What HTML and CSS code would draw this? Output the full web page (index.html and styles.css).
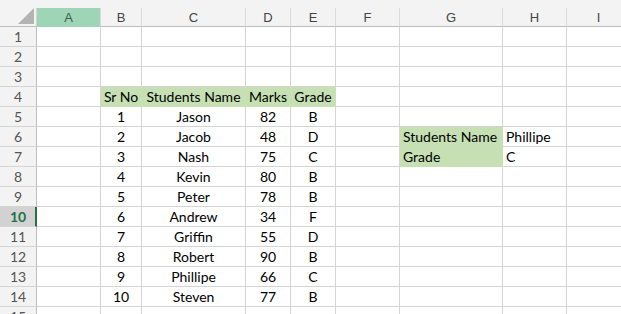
FILE: index.html
```html
<!DOCTYPE html>
<html lang="en">
<head>
  <meta charset="UTF-8">
  <title>Students Grades</title>
  <link rel="stylesheet" href="styles.css">
</head>
<body>
  <div class="sheet">
    <div class="top-strip"></div>

    <div class="row col-heads">
      <div class="corner">
        <svg width="16" height="16" viewBox="0 0 16 16"><polygon points="0,16 16,16 16,0" fill="#b4b4b4"/></svg>
      </div>
      <div class="ch selected">A</div>
      <div class="ch">B</div>
      <div class="ch">C</div>
      <div class="ch">D</div>
      <div class="ch">E</div>
      <div class="ch">F</div>
      <div class="ch">G</div>
      <div class="ch">H</div>
      <div class="ch">I</div>
    </div>

    <div class="row">
      <div class="rh">1</div>
      <div class="c"></div><div class="c"></div><div class="c"></div><div class="c"></div><div class="c"></div><div class="c"></div><div class="c"></div><div class="c"></div><div class="c"></div>
    </div>
    <div class="row">
      <div class="rh">2</div>
      <div class="c"></div><div class="c"></div><div class="c"></div><div class="c"></div><div class="c"></div><div class="c"></div><div class="c"></div><div class="c"></div><div class="c"></div>
    </div>
    <div class="row">
      <div class="rh">3</div>
      <div class="c"></div><div class="c"></div><div class="c"></div><div class="c"></div><div class="c"></div><div class="c"></div><div class="c"></div><div class="c"></div><div class="c"></div>
    </div>
    <div class="row">
      <div class="rh">4</div>
      <div class="c"></div>
      <div class="c fill mid">Sr No</div>
      <div class="c fill mid">Students Name</div>
      <div class="c fill mid">Marks</div>
      <div class="c fill mid">Grade</div>
      <div class="c"></div><div class="c"></div><div class="c"></div><div class="c"></div>
    </div>
    <div class="row">
      <div class="rh">5</div>
      <div class="c"></div>
      <div class="c mid">1</div><div class="c mid">Jason</div><div class="c mid">82</div><div class="c mid">B</div>
      <div class="c"></div><div class="c"></div><div class="c"></div><div class="c"></div>
    </div>
    <div class="row">
      <div class="rh">6</div>
      <div class="c"></div>
      <div class="c mid">2</div><div class="c mid">Jacob</div><div class="c mid">48</div><div class="c mid">D</div>
      <div class="c"></div>
      <div class="c fill">Students Name</div>
      <div class="c">Phillipe</div>
      <div class="c"></div>
    </div>
    <div class="row">
      <div class="rh">7</div>
      <div class="c"></div>
      <div class="c mid">3</div><div class="c mid">Nash</div><div class="c mid">75</div><div class="c mid">C</div>
      <div class="c"></div>
      <div class="c fill">Grade</div>
      <div class="c">C</div>
      <div class="c"></div>
    </div>
    <div class="row">
      <div class="rh">8</div>
      <div class="c"></div>
      <div class="c mid">4</div><div class="c mid">Kevin</div><div class="c mid">80</div><div class="c mid">B</div>
      <div class="c"></div><div class="c"></div><div class="c"></div><div class="c"></div>
    </div>
    <div class="row">
      <div class="rh">9</div>
      <div class="c"></div>
      <div class="c mid">5</div><div class="c mid">Peter</div><div class="c mid">78</div><div class="c mid">B</div>
      <div class="c"></div><div class="c"></div><div class="c"></div><div class="c"></div>
    </div>
    <div class="row">
      <div class="rh active">10</div>
      <div class="c"></div>
      <div class="c mid">6</div><div class="c mid">Andrew</div><div class="c mid">34</div><div class="c mid">F</div>
      <div class="c"></div><div class="c"></div><div class="c"></div><div class="c"></div>
    </div>
    <div class="row">
      <div class="rh">11</div>
      <div class="c"></div>
      <div class="c mid">7</div><div class="c mid">Griffin</div><div class="c mid">55</div><div class="c mid">D</div>
      <div class="c"></div><div class="c"></div><div class="c"></div><div class="c"></div>
    </div>
    <div class="row">
      <div class="rh">12</div>
      <div class="c"></div>
      <div class="c mid">8</div><div class="c mid">Robert</div><div class="c mid">90</div><div class="c mid">B</div>
      <div class="c"></div><div class="c"></div><div class="c"></div><div class="c"></div>
    </div>
    <div class="row">
      <div class="rh">13</div>
      <div class="c"></div>
      <div class="c mid">9</div><div class="c mid">Phillipe</div><div class="c mid">66</div><div class="c mid">C</div>
      <div class="c"></div><div class="c"></div><div class="c"></div><div class="c"></div>
    </div>
    <div class="row">
      <div class="rh">14</div>
      <div class="c"></div>
      <div class="c mid">10</div><div class="c mid">Steven</div><div class="c mid">77</div><div class="c mid">B</div>
      <div class="c"></div><div class="c"></div><div class="c"></div><div class="c"></div>
    </div>
    <div class="row">
      <div class="rh">15</div>
      <div class="c"></div><div class="c"></div><div class="c"></div><div class="c"></div><div class="c"></div><div class="c"></div><div class="c"></div><div class="c"></div><div class="c"></div>
    </div>
  </div>
</body>
</html>
```
FILE: styles.css
```css
* {
  box-sizing: border-box;
}
body {
  margin: 0;
  background: #ffffff;
  font-family: 'Lato', 'Liberation Sans', sans-serif;
  font-size: 14px;
  color: #000000;
  overflow: hidden;
}
.sheet {
  width: 621px;
}
.top-strip {
  height: 8px;
  background: #f3f3f3;
}
.row {
  display: grid;
  grid-template-columns: 37px 64px 41px 104px 45px 45px 64px 103px 64px 64px;
  height: 20px;
}
.col-heads {
  height: 19px;
  background: #f3f3f3;
}
.corner {
  border-right: 1px solid #d4d4d4;
  border-bottom: 1px solid #bdbdbd;
  display: flex;
  justify-content: flex-end;
  align-items: flex-end;
  padding: 0 2px 2px 0;
}
.ch {
  border-right: 1px solid #dadada;
  border-bottom: 1px solid #bdbdbd;
  color: #444444;
  font-family: 'Liberation Sans', sans-serif;
  font-size: 13px;
  display: flex;
  align-items: center;
  justify-content: center;
}
.ch.selected {
  background: #9fd5b7;
  border-bottom-color: #9fd5b7;
  color: #3e5b4c;
}
.rh {
  background: #f3f3f3;
  border-right: 1px solid #bdbdbd;
  border-bottom: 1px solid #d4d4d4;
  color: #555555;
  font-size: 14px;
  display: flex;
  align-items: center;
  justify-content: center;
}
.rh.active {
  background: #d2d2d2;
  color: #217346;
  font-weight: 700;
  border-right: 2px solid #217346;
  padding-left: 1px;
}
.c {
  border-right: 1px solid #d4d4d4;
  border-bottom: 1px solid #d4d4d4;
  display: flex;
  align-items: flex-end;
  padding: 0 3px 1px;
  white-space: nowrap;
  overflow: hidden;
}
.c.mid {
  justify-content: center;
}
.c.fill {
  background: #c6e0b4;
  border-color: #c6e0b4;
}
```
